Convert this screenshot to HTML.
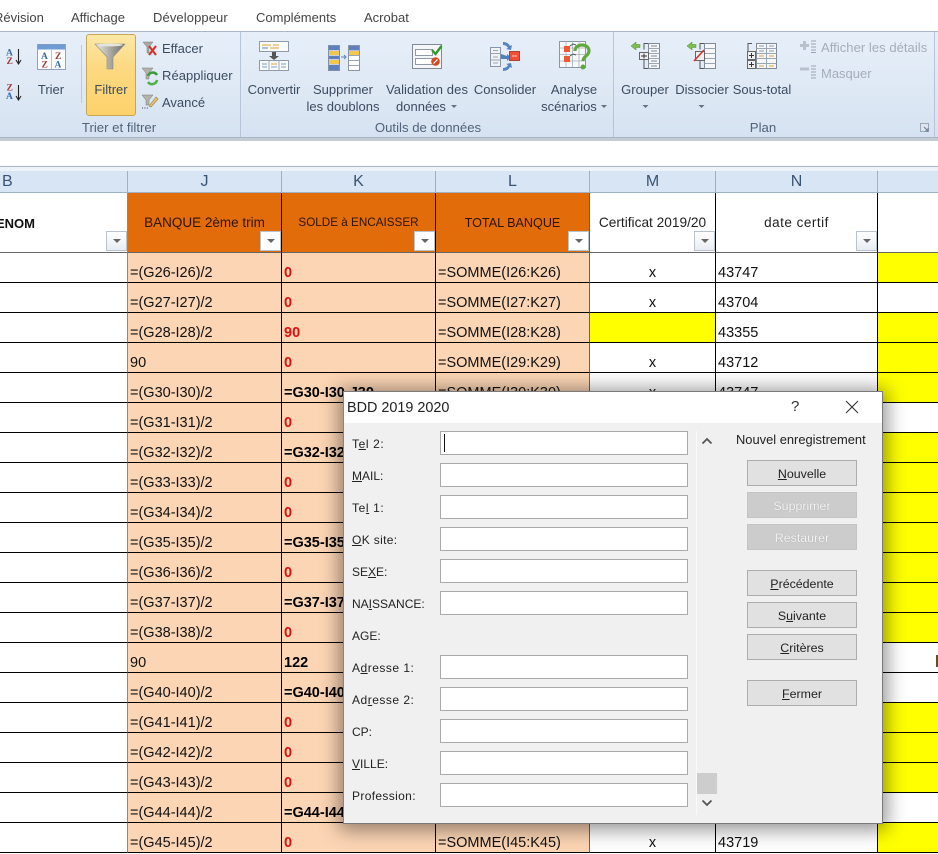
<!DOCTYPE html>
<html><head><meta charset="utf-8"><title>BDD 2019 2020</title>
<style>
html,body{margin:0;padding:0;background:#fff}
body{width:938px;height:854px;position:relative;overflow:hidden;font-family:"Liberation Sans",sans-serif}
.a{position:absolute;white-space:nowrap}
.tab{font-size:13px;color:#444;top:10px;line-height:16px}
.rb{font-size:13px;color:#3c4c60;line-height:16px;text-align:center;width:120px}
.rl{font-size:13px;color:#3c4c60;line-height:16px}
.dis{color:#a5adb8}
.gl{font-size:13.2px;color:#52637a;line-height:16px;text-align:center;width:160px;top:120px}
.ch{position:absolute;top:171px;height:22px;background:#d8e5f4;border-right:1px solid #9fb1c8;box-sizing:border-box;text-align:center;font-size:16px;line-height:22px;color:#3a5475}
table{position:absolute;left:0;top:193px;border-collapse:separate;border-spacing:0;table-layout:fixed;width:950px}
td{box-sizing:border-box;height:30px;padding:0 2px 0;border-right:1px solid #000;border-bottom:1px solid #000;vertical-align:bottom;font-size:14.5px;line-height:17px;color:#111;white-space:nowrap;overflow:hidden;background:#fff}
tr.h td{height:60px;border-bottom:1px solid #666;vertical-align:middle;text-align:center;font-size:12.6px;padding:1px 0 0;color:#222;line-height:16px}
td.a0{border-right:1px solid #8a8a8a}
td.j,td.k{background:#fcd5b4}
td.l{background:#fcd5b4;border-right:1px solid #75604e}
tr.h td.j,tr.h td.k{background:#e26b0a;color:#2e1500}
tr.h td.l{background:#e26b0a;color:#2e1500;border-right:1px solid #a04d08}
td.r{color:#e01010;font-weight:bold}
td.b{font-weight:bold;color:#000}
td.c{text-align:center}
td.y{background:#ff0}
.dd{position:absolute;width:21px;height:20px;top:231px;box-sizing:border-box;border:1px solid #b9c3ce;background:linear-gradient(#fff,#e8edf3)}
.dd:after{content:"";position:absolute;left:6px;top:7px;border-left:4px solid transparent;border-right:4px solid transparent;border-top:4px solid #666}
#dlg{position:absolute;left:343px;top:391px;width:540px;height:433px;box-sizing:border-box;background:#f0f0f0;border:1px solid #7a7a7a;border-left-color:#8a8378;box-shadow:0 2px 18px 4px rgba(0,0,0,.42)}
#tb{position:absolute;left:0;top:0;right:0;height:31px;background:#fff}
.lb{position:absolute;left:352px;font-size:12px;line-height:15px;color:#222;white-space:nowrap}
.ls{letter-spacing:.35px}
.in{position:absolute;left:440px;width:248px;height:24px;box-sizing:border-box;background:#fff;border:1px solid #a9a9a9}
.bt{position:absolute;left:747px;width:110px;height:26px;box-sizing:border-box;background:#e1e1e1;border:1px solid #adadad;text-align:center;font-size:12.4px;line-height:26px;color:#222}
.bt.o{background:#cccccc;color:#f4f4f4;text-shadow:0 0 1px #9a9a9a;border-color:#c4c4c4}
u{text-underline-offset:1px}
</style></head><body>

<div class="a" style="left:0;top:0;width:938px;height:31px;background:#fff"></div>
<div class="a tab" style="left:-6px">Révision</div>
<div class="a tab" style="left:71px">Affichage</div>
<div class="a tab" style="left:153px;letter-spacing:.1px">Développeur</div>
<div class="a tab" style="left:256px">Compléments</div>
<div class="a tab" style="left:364px">Acrobat</div>

<div class="a" style="left:0;top:31px;width:938px;height:107px;box-sizing:border-box;border-top:1px solid #a9b7c6;background:linear-gradient(#e6eff9,#dfe9f5 50%,#d5e2f1)"></div>
<div class="a" style="left:0;top:137px;width:938px;height:4px;background:#c3cbd5;border-top:1px solid #a9b4c2;box-sizing:border-box"></div>
<div class="a" style="left:240px;top:32px;width:1px;height:105px;background:#b6c5d7"></div>
<div class="a" style="left:613px;top:32px;width:1px;height:105px;background:#b6c5d7"></div>
<div class="a" style="left:934px;top:32px;width:1px;height:105px;background:#b6c5d7"></div>
<div class="a" style="left:81px;top:45px;width:1px;height:58px;background:#bccada"></div>
<div class="a" style="left:86px;top:34px;width:50px;height:82px;box-sizing:border-box;border:1px solid #c8a654;border-radius:3px;background:linear-gradient(#fde8a6,#fcd982 40%,#fdd26c)"></div>

<svg class="a" style="left:0;top:0" width="938" height="142" viewBox="0 0 938 142" font-family="Liberation Serif,serif" font-weight="bold" font-size="9.5">
<!-- sort AZ -->
<text x="6" y="55.5" fill="#3c6aa8">A</text><text x="6.5" y="64" fill="#a03a3a">Z</text>
<path d="M18.5 49v14M16 60l2.5 4 2.5-4" stroke="#222" stroke-width="1.1" fill="none"/>
<!-- sort ZA -->
<text x="6.5" y="90.5" fill="#a03a3a">Z</text><text x="6" y="99" fill="#3c6aa8">A</text>
<path d="M18.5 85v14M16 96l2.5 4 2.5-4" stroke="#222" stroke-width="1.1" fill="none"/>
<!-- Trier -->
<rect x="37.5" y="44.5" width="28" height="25" fill="#fdfdfe" stroke="#8fa2b8"/>
<rect x="38" y="44.5" width="27" height="5" fill="#6f9bd4"/>
<path d="M51.5 50v19" stroke="#b7c3d0"/>
<text x="41" y="59" fill="#3c6aa8">A</text><text x="41.5" y="67.5" fill="#a03a3a">Z</text>
<text x="55" y="59" fill="#a03a3a">Z</text><text x="54.5" y="67.5" fill="#3c6aa8">A</text>
<!-- funnel -->
<defs><linearGradient id="f" x1="0" x2="1" y1="0" y2="0"><stop offset="0" stop-color="#f2f2ee"/><stop offset=".45" stop-color="#b0b0a8"/><stop offset="1" stop-color="#6f6f67"/></linearGradient></defs>
<path d="M95 44h30l-12 13v12h-6V57z" fill="url(#f)" stroke="#8c8c84" stroke-width=".6"/>
<ellipse cx="110" cy="45" rx="13" ry="1.4" fill="#e4e4de"/>
<!-- Effacer -->
<path d="M143 42h10l-4 5v6h-2v-6z" fill="#a9a9a4" stroke="#777" stroke-width=".5"/>
<path d="M149 46l7 9M156 46l-7 9" stroke="#d8322a" stroke-width="2.2"/>
<!-- Reappliquer -->
<path d="M142 68h11l-4 5v6h-3v-6z" fill="#b3b3ad" stroke="#777" stroke-width=".5"/>
<path d="M148 76a5 5 0 0 1 9-1" stroke="#3f9a3c" stroke-width="2.6" fill="none"/>
<path d="M157 80a5 5 0 0 1-9 2" stroke="#54b04a" stroke-width="2.6" fill="none"/>
<!-- Avance -->
<path d="M142 95h11l-4 5v5h-3v-5z" fill="#b3b3ad" stroke="#777" stroke-width=".5"/>
<path d="M149 106l7-9 2 2-7 8z" fill="#e9c56c" stroke="#9a7a3a" stroke-width=".6"/>
<path d="M142 108h7" stroke="#444" stroke-dasharray="1 1.4"/>
<!-- Convertir -->
<g stroke="#8e9aa8" fill="#fafbfc"><rect x="259.5" y="41.5" width="29" height="10"/><rect x="259.5" y="60.5" width="29" height="10"/></g>
<path d="M262 45h9M273 45h6M262 48h6M270 48h9" stroke="#e0a030"/><path d="M262 48h6" stroke="#5a84c4"/>
<path d="M269 60.5v10M279 60.5v10" stroke="#9aa6b4"/>
<path d="M262 64h5M271 64h6M281 64h5M262 67h5M271 67h6M281 67h5" stroke="#7a9ccc"/><path d="M271 64h6" stroke="#e0a030"/>
<path d="M272 52h4v4h3l-5 4-5-4h3z" fill="#555"/>
<!-- Supprimer -->
<rect x="328.5" y="45.5" width="11" height="25" fill="#5f7fbd" stroke="#8090a8"/>
<rect x="329" y="51" width="10" height="4" fill="#f0c850"/><rect x="329" y="60" width="10" height="4" fill="#f0c850"/>
<path d="M329 55.5h10M329 59.5h10M329 64.5h10M329 50.5h10" stroke="#c8d0dc"/>
<path d="M341 57h5M344 55l2 2-2 2" stroke="#5a84c4" fill="none"/>
<rect x="348.5" y="45.5" width="11" height="25" fill="#fff" stroke="#8a96a6"/>
<rect x="349" y="46" width="10" height="4.5" fill="#5f7fbd"/><rect x="349" y="51" width="10" height="4" fill="#f0c850"/>
<path d="M349 55.5h10M349 60.5h10M349 65.5h10" stroke="#9aa6b4"/>
<!-- Validation -->
<rect x="412.5" y="44.5" width="29" height="24" fill="#f4f6f8" stroke="#7f8a96"/>
<rect x="415.5" y="49.5" width="17" height="6" fill="#fff" stroke="#8f9aa6"/><rect x="415.5" y="58.5" width="17" height="6" fill="#fff" stroke="#8f9aa6"/>
<path d="M432 50l3.5 4 6-8" stroke="#2f9a2a" stroke-width="2.4" fill="none"/>
<circle cx="435.5" cy="61.5" r="4.3" fill="#d8481f"/><path d="M433.5 63.5l4-4" stroke="#fff" stroke-width="1.2"/>
<!-- Consolider -->
<rect x="490.5" y="47.5" width="10" height="19" fill="#f0f2f5" stroke="#8a96a6"/>
<path d="M490.5 53.5h10M490.5 60h10M493 50.5h5M493 57h5M493 63h5" stroke="#9aa6b4"/>
<path d="M501 54l6 2v-2l4 3.5-4 3.5v-2h-6z" fill="#4a82c8"/>
<rect x="509.5" y="51.5" width="10" height="9" fill="#f0503a" stroke="#b04030"/>
<path d="M512 56h5" stroke="#f5d0b0"/>
<path d="M503 42c4 0 6 2 7 4l2-1-1 5-5-1 2-1c-1-2-3-3-5-3z" fill="#5585c0"/>
<path d="M503 71c4 0 6-2 7-4l2 1-1-5-5 1 2 1c-1 2-3 3-5 3z" fill="#5585c0"/>
<!-- Analyse -->
<rect x="559.5" y="41.5" width="26" height="26" fill="#f8f9fb" stroke="#8a96a6"/>
<path d="M559.5 48h26M559.5 54.5h26M559.5 61h26M566 41.5v26M572.5 41.5v26M579 41.5v26" stroke="#a6b0bc" stroke-width=".8"/>
<rect x="564" y="46" width="6" height="6" fill="#ef5a35"/><rect x="564" y="56" width="6" height="6" fill="#ef5a35"/>
<path d="M570 46l3-2 3 1M570 56l3-2 3 1" stroke="#555" fill="none"/>
<path d="M575 51c0-8 14-8 14 0 0 5-6 5-6 10" stroke="#62a83e" stroke-width="3.2" fill="none"/>
<circle cx="583" cy="67" r="2.5" fill="#62a83e"/>
<!-- Grouper -->
<path d="M631 46l5-4v2.5h4v3h-4V50z" fill="#7cc04a" stroke="#4c8a30" stroke-width=".5"/>
<path d="M648 43.5h-4v6M644 60v8.5h4" stroke="#555" fill="none"/>
<rect x="648.5" y="43.5" width="11" height="25" fill="#f6f7f9" stroke="#7f8a96"/>
<path d="M648.5 48.5h11M648.5 53.5h11M648.5 58.5h11M648.5 63.5h11" stroke="#9aa6b4"/>
<path d="M651 46h6M651 51h6M651 56h6M651 61h6M651 66h6" stroke="#7a8a9c"/>
<rect x="639.5" y="52.5" width="9" height="7" fill="#eef0f3" stroke="#666"/><path d="M641 56h6M644 53.5v5" stroke="#333"/>
<!-- Dissocier -->
<path d="M687 46l5-4v2.5h4v3h-4V50z" fill="#7cc04a" stroke="#4c8a30" stroke-width=".5"/>
<path d="M704 43.5h-4v6M700 60v8.5h4" stroke="#555" fill="none"/>
<rect x="704.5" y="43.5" width="11" height="25" fill="#f6f7f9" stroke="#7f8a96"/>
<path d="M704.5 48.5h11M704.5 53.5h11M704.5 58.5h11M704.5 63.5h11" stroke="#9aa6b4"/>
<rect x="695.5" y="51.5" width="9" height="9" fill="#eef0f3" stroke="#666"/>
<path d="M694 61l10-11" stroke="#d8322a" stroke-width="1.6"/>
<!-- Sous-total -->
<path d="M752 43.5h-4v25h4" stroke="#555" fill="none"/>
<rect x="756.5" y="43.5" width="20" height="25" fill="#f6f7f9" stroke="#7f8a96"/>
<path d="M756.5 48.5h20M756.5 53.5h20M756.5 58.5h20M756.5 63.5h20M766.5 43.5v25" stroke="#9aa6b4"/>
<path d="M759 46h5M769 46h5M759 51h5M769 51h5" stroke="#8a9aac"/>
<path d="M759 56h5M769 56h5M759 66h5M769 66h5" stroke="#e0a030"/>
<rect x="747.5" y="51.5" width="8" height="8" fill="#eef0f3" stroke="#666"/><path d="M749 55.5h5M751.5 53v5" stroke="#333"/>
<rect x="747.5" y="60.5" width="8" height="8" fill="#eef0f3" stroke="#666"/><path d="M749 64.5h5M751.5 62v5" stroke="#333"/>
<!-- Afficher / Masquer -->
<path d="M800 44h3v-3h3v3h3v3h-3v3h-3v-3h-3z" fill="#b9c2cc"/>
<path d="M811 41h5M811 44h5M811 47h5M811 50h5M811 52.5h5" stroke="#9aa4b0"/>
<rect x="800" y="67.5" width="9" height="3" fill="#b9c2cc"/>
<path d="M811 66h5M811 69h5M811 72h5M811 75h5M811 78h5" stroke="#9aa4b0"/>
<!-- launcher -->
<rect x="920.5" y="123.5" width="8" height="8" fill="#dde5ef" stroke="#9ba8b8"/><path d="M924 127l4 4M928 128v3h-3" stroke="#6a7a8c" fill="none"/>
<!-- small arrows -->
<path d="M451 105h6l-3 3zM601 105h6l-3 3zM642.5 105h6l-3 3zM698.5 105h6l-3 3z" fill="#66727f"/>
</svg>

<div class="a rb" style="left:-9px;top:82px">Trier</div>
<div class="a rb" style="left:51px;top:82px">Filtrer</div>
<div class="a rl" style="left:162px;top:41px">Effacer</div>
<div class="a rl" style="left:162px;top:68px;letter-spacing:.05px">Réappliquer</div>
<div class="a rl" style="left:162px;top:95px">Avancé</div>
<div class="a rb" style="left:214px;top:82px">Convertir</div>
<div class="a rb" style="left:283px;top:82px">Supprimer</div>
<div class="a rb" style="left:283px;top:99px">les doublons</div>
<div class="a rb" style="left:367px;top:82px;letter-spacing:.1px">Validation des</div>
<div class="a rb" style="left:361px;top:99px">données</div>
<div class="a rb" style="left:445px;top:82px">Consolider</div>
<div class="a rb" style="left:514px;top:82px">Analyse</div>
<div class="a rb" style="left:509px;top:99px">scénarios</div>
<div class="a rb" style="left:585px;top:82px">Grouper</div>
<div class="a rb" style="left:642px;top:82px">Dissocier</div>
<div class="a rb" style="left:702px;top:82px">Sous-total</div>
<div class="a rl dis" style="left:821px;top:40px;letter-spacing:.05px">Afficher les détails</div>
<div class="a rl dis" style="left:821px;top:66px">Masquer</div>
<div class="a gl" style="left:39px">Trier et filtrer</div>
<div class="a gl" style="left:348px">Outils de données</div>
<div class="a gl" style="left:683px">Plan</div>

<div class="a" style="left:0;top:166px;width:938px;height:5px;background:#eef3f9;border-top:1px solid #a9b5c4;box-sizing:border-box"></div>
<div class="ch" style="left:0;width:128px;text-align:left;padding-left:2px">B</div>
<div class="ch" style="left:128px;width:154px">J</div>
<div class="ch" style="left:282px;width:154px">K</div>
<div class="ch" style="left:436px;width:154px">L</div>
<div class="ch" style="left:590px;width:126px">M</div>
<div class="ch" style="left:716px;width:162px">N</div>
<div class="ch" style="left:878px;width:60px;border-right:0"></div>
<div class="a" style="left:0;top:192px;width:938px;height:1px;background:#9fb1c8"></div>

<table>
<colgroup><col style="width:128px"><col style="width:154px"><col style="width:154px"><col style="width:154px"><col style="width:126px"><col style="width:162px"><col style="width:72px"></colgroup>
<tr class="h"><td class="a0"></td><td class="j" style="font-size:13.5px">BANQUE 2ème trim</td><td class="k" style="font-size:11.7px">SOLDE à ENCAISSER</td><td class="l">TOTAL BANQUE</td><td style="font-size:13.7px">Certificat 2019/20</td><td style="font-size:13.5px;letter-spacing:.5px">date certif</td><td></td></tr>
<tr><td class="a0"></td><td class="j">=(G26-I26)/2</td><td class="k r">0</td><td class="l">=SOMME(I26:K26)</td><td class="c">x</td><td>43747</td><td class="y"></td></tr>
<tr><td class="a0"></td><td class="j">=(G27-I27)/2</td><td class="k r">0</td><td class="l">=SOMME(I27:K27)</td><td class="c">x</td><td>43704</td><td></td></tr>
<tr><td class="a0"></td><td class="j">=(G28-I28)/2</td><td class="k r">90</td><td class="l">=SOMME(I28:K28)</td><td class="y"></td><td>43355</td><td class="y"></td></tr>
<tr><td class="a0"></td><td class="j">90</td><td class="k r">0</td><td class="l">=SOMME(I29:K29)</td><td class="c">x</td><td>43712</td><td class="y"></td></tr>
<tr><td class="a0"></td><td class="j">=(G30-I30)/2</td><td class="k b">=G30-I30-J30</td><td class="l">=SOMME(I30:K30)</td><td class="c">x</td><td>43747</td><td class="y"></td></tr>
<tr><td class="a0"></td><td class="j">=(G31-I31)/2</td><td class="k r">0</td><td class="l"></td><td></td><td></td><td></td></tr>
<tr><td class="a0"></td><td class="j">=(G32-I32)/2</td><td class="k b">=G32-I32-J32</td><td class="l"></td><td></td><td></td><td class="y"></td></tr>
<tr><td class="a0"></td><td class="j">=(G33-I33)/2</td><td class="k r">0</td><td class="l"></td><td></td><td></td><td class="y"></td></tr>
<tr><td class="a0"></td><td class="j">=(G34-I34)/2</td><td class="k r">0</td><td class="l"></td><td></td><td></td><td class="y"></td></tr>
<tr><td class="a0"></td><td class="j">=(G35-I35)/2</td><td class="k b">=G35-I35-J35</td><td class="l"></td><td></td><td></td><td class="y"></td></tr>
<tr><td class="a0"></td><td class="j">=(G36-I36)/2</td><td class="k r">0</td><td class="l"></td><td></td><td></td><td class="y"></td></tr>
<tr><td class="a0"></td><td class="j">=(G37-I37)/2</td><td class="k b">=G37-I37-J37</td><td class="l"></td><td></td><td></td><td class="y"></td></tr>
<tr><td class="a0"></td><td class="j">=(G38-I38)/2</td><td class="k r">0</td><td class="l"></td><td></td><td></td><td class="y"></td></tr>
<tr><td class="a0"></td><td class="j">90</td><td class="k b">122</td><td class="l"></td><td></td><td></td><td></td></tr>
<tr><td class="a0"></td><td class="j">=(G40-I40)/2</td><td class="k b">=G40-I40-J40</td><td class="l"></td><td></td><td></td><td></td></tr>
<tr><td class="a0"></td><td class="j">=(G41-I41)/2</td><td class="k r">0</td><td class="l"></td><td></td><td></td><td class="y"></td></tr>
<tr><td class="a0"></td><td class="j">=(G42-I42)/2</td><td class="k r">0</td><td class="l"></td><td></td><td></td><td class="y"></td></tr>
<tr><td class="a0"></td><td class="j">=(G43-I43)/2</td><td class="k r">0</td><td class="l"></td><td></td><td></td><td class="y"></td></tr>
<tr><td class="a0"></td><td class="j">=(G44-I44)/2</td><td class="k b">=G44-I44-J44</td><td class="l"></td><td></td><td></td><td></td></tr>
<tr><td class="a0"></td><td class="j">=(G45-I45)/2</td><td class="k r">0</td><td class="l">=SOMME(I45:K45)</td><td class="c">x</td><td>43719</td><td class="y"></td></tr>
</table>
<div class="a" style="left:-4px;top:216px;font-size:13px;line-height:16px;font-weight:bold;color:#111">ENOM</div>
<div class="dd" style="left:106px"></div>
<div class="dd" style="left:260px;background:#fff"></div>
<div class="dd" style="left:414px;background:#fff"></div>
<div class="dd" style="left:568px;background:#fff"></div>
<div class="dd" style="left:694px"></div>
<div class="dd" style="left:856px"></div>
<div class="a" style="left:936px;top:655px;width:2px;height:12px;background:#6b4a20"></div>

<div id="dlg"><div id="tb"></div></div>
<div class="a" style="left:347px;top:399px;font-size:14.4px;line-height:18px;color:#222">BDD 2019 2020</div>
<div class="a" style="left:791px;top:398px;font-size:15px;line-height:18px;color:#333">?</div>
<svg class="a" style="left:845px;top:400px" width="14" height="14"><path d="M1 1l12 12M13 1L1 13" stroke="#333" stroke-width="1.1"/></svg>

<div class="lb ls" style="top:437px;letter-spacing:.6px">T<u>e</u>l 2:</div>
<div class="lb" style="top:469px"><u>M</u>AIL:</div>
<div class="lb ls" style="top:501px;letter-spacing:.6px">Te<u>l</u> 1:</div>
<div class="lb ls" style="top:533px"><u>O</u>K site:</div>
<div class="lb" style="top:565px">SE<u>X</u>E:</div>
<div class="lb" style="top:597px">NA<u>I</u>SSANCE:</div>
<div class="lb" style="top:629px">AGE:</div>
<div class="lb ls" style="top:661px;letter-spacing:.5px">A<u>d</u>resse 1:</div>
<div class="lb ls" style="top:693px;letter-spacing:.5px">Ad<u>r</u>esse 2:</div>
<div class="lb" style="top:725px">CP:</div>
<div class="lb" style="top:757px"><u>V</u>ILLE:</div>
<div class="lb ls" style="top:789px">Profession:</div>

<div class="in" style="top:431px"><div style="position:absolute;left:3px;top:2px;width:1px;height:18px;background:#111"></div></div>
<div class="in" style="top:463px"></div>
<div class="in" style="top:495px"></div>
<div class="in" style="top:527px"></div>
<div class="in" style="top:559px"></div>
<div class="in" style="top:591px"></div>
<div class="in" style="top:655px"></div>
<div class="in" style="top:687px"></div>
<div class="in" style="top:719px"></div>
<div class="in" style="top:751px"></div>
<div class="in" style="top:783px"></div>

<div class="a" style="left:696px;top:431px;width:1px;height:384px;background:#fafafa"></div>
<div class="a" style="left:697px;top:773px;width:20px;height:21px;background:#cdcdcd"></div>
<svg class="a" style="left:701px;top:437px" width="12" height="8"><path d="M1.5 6.5L6 2l4.500 4.500" stroke="#555" stroke-width="1.8" fill="none"/></svg>
<svg class="a" style="left:701px;top:799px" width="12" height="8"><path d="M1.5 1.5L6 6l4.500-4.500" stroke="#555" stroke-width="1.8" fill="none"/></svg>

<div class="a" style="left:736px;top:432px;font-size:12.9px;line-height:15px;color:#222">Nouvel enregistrement</div>
<div class="bt" style="top:460px"><u>N</u>ouvelle</div>
<div class="bt o" style="top:492px">Supprimer</div>
<div class="bt o" style="top:524px">Restaurer</div>
<div class="bt" style="top:570px"><u>P</u>récédente</div>
<div class="bt" style="top:602px">S<u>u</u>ivante</div>
<div class="bt" style="top:634px"><u>C</u>ritères</div>
<div class="bt" style="top:680px"><u>F</u>ermer</div>
</body></html>
